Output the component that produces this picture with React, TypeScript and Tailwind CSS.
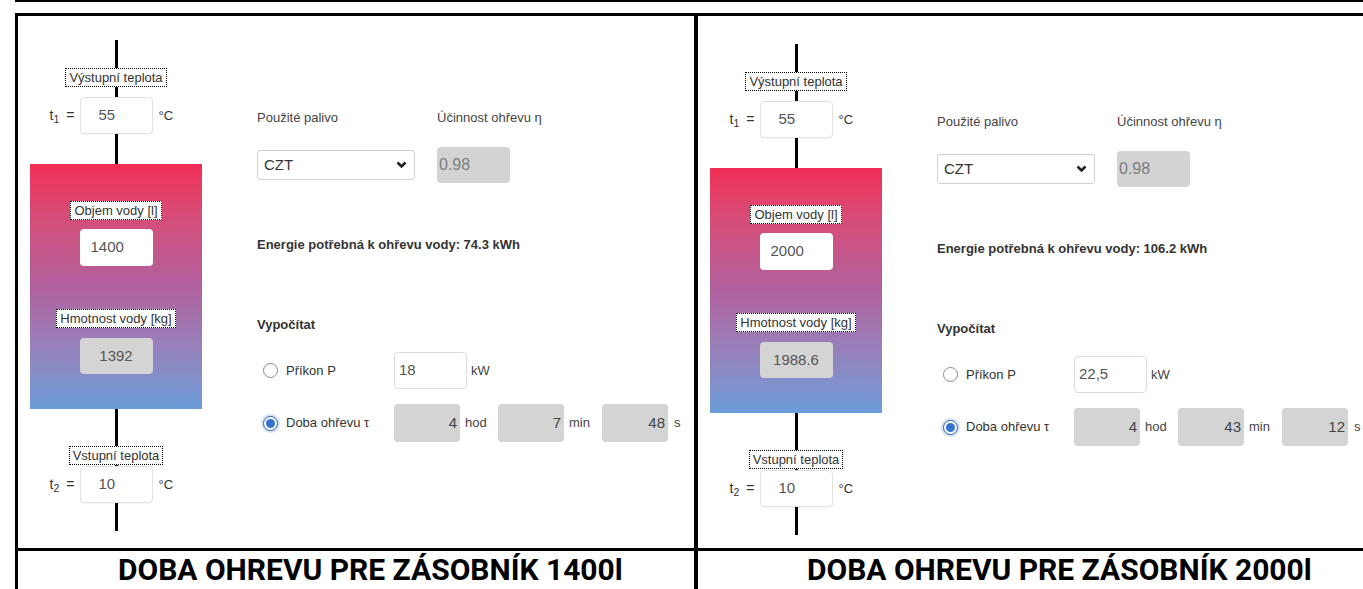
import React from "react";

type PanelData = {
  volume: string;
  mass: string;
  energy: string;
  power: string;
  h: string;
  m: string;
  s: string;
};

function Tag({ children }: { children: React.ReactNode }) {
  return (
    <div className="border border-dotted border-black bg-white px-[3px] text-[13px] leading-[17px] text-[#333] whitespace-nowrap">
      {children}
    </div>
  );
}

function TempRow({ idx, value }: { idx: string; value: string }) {
  return (
    <div className="grid w-[172px] grid-cols-[1fr_73px_1fr] items-center">
      <span className="flex items-baseline justify-self-end pr-[5px] text-[14px] text-[#333]">
        <span>
          t<sub>{idx}</sub>
        </span>
        <span className="ml-[7px]">=</span>
      </span>
      <div className="flex h-[37px] w-[73px] items-center rounded-[4px] border border-[#e2e2e2] bg-white pl-[18px] text-[15px] text-[#555] shadow-[0_1px_2px_rgba(0,0,0,0.04)]">
        {value}
      </div>
      <span className="pl-[6px] text-[13px] text-[#333]">°C</span>
    </div>
  );
}

function Radio({ checked }: { checked?: boolean }) {
  if (checked) {
    return (
      <span className="flex h-[15px] w-[15px] items-center justify-center rounded-full border border-[#2a5fb4] bg-white shadow-[0_0_0_2px_#d5e3f7]">
        <span className="h-[9px] w-[9px] rounded-full bg-[#3572d2]" />
      </span>
    );
  }
  return <span className="h-[15px] w-[15px] rounded-full border border-[#8a8a8a] bg-white" />;
}

function Gray({ value }: { value: string }) {
  return (
    <div className="flex h-[38px] w-[66px] items-center justify-end rounded-[4px] bg-[#d4d4d4] pr-[3px] text-[15px] text-[#444]">
      {value}
    </div>
  );
}

function Panel({ d }: { d: PanelData }) {
  return (
    <div className="flex pl-[12px]">
      {/* diagram */}
      <div className="flex w-[172px] flex-col items-center pt-[24px]">
        <div className="h-[28px] w-[3px] bg-black" />
        <Tag>Výstupní teplota</Tag>
        <div className="h-[10px] w-[3px] bg-black" />
        <TempRow idx="1" value="55" />
        <div className="h-[30px] w-[3px] bg-black" />
        <div className="flex h-[245px] w-[172px] flex-col items-center bg-linear-to-b from-[#f12c55] via-[#b0609f] to-[#6a9dd9] pt-[37px]">
          <Tag>Objem vody [l]</Tag>
          <div className="mt-[9px] flex h-[37px] w-[73px] items-center rounded-[4px] bg-white pl-[11px] text-[15px] text-[#555]">
            {d.volume}
          </div>
          <div className="mt-[43px]">
            <Tag>Hmotnost vody [kg]</Tag>
          </div>
          <div className="mt-[10px] flex h-[36px] w-[73px] items-center justify-center rounded-[4px] bg-[#d4d4d4] text-[15px] text-[#555]">
            {d.mass}
          </div>
        </div>
        <div className="h-[37px] w-[3px] bg-black" />
        <Tag>Vstupní teplota</Tag>
        <div className="h-[1px] w-[3px] bg-black" />
        <TempRow idx="2" value="10" />
        <div className="h-[28px] w-[3px] bg-black" />
      </div>

      {/* form */}
      <div className="ml-[55px] flex flex-col pt-[94px] text-[13px] text-[#333]">
        <div className="flex leading-[16px] text-[#444]">
          <span className="w-[180px]">Použité palivo</span>
          <span>Účinnost ohřevu η</span>
        </div>
        <div className="mt-[21px] flex h-[36px] items-center">
          <div className="flex h-[30px] w-[158px] items-center justify-between rounded-[3px] border border-[#cfcfcf] bg-white pl-[6px] pr-[7px] text-[15px] text-[#333]">
            <span>CZT</span>
            <svg width="11" height="8" viewBox="0 0 11 8">
              <path d="M1.5 1.5 L5.5 5.5 L9.5 1.5" fill="none" stroke="#222" strokeWidth="2.6" />
            </svg>
          </div>
          <div className="ml-[22px] flex h-[36px] w-[73px] items-center rounded-[4px] bg-[#d3d3d3] pl-[2px] text-[16px] text-[#7d7d7d]">
            0.98
          </div>
        </div>
        <div className="mt-[54px] whitespace-nowrap font-bold leading-[16px] text-[#333]">
          Energie potřebná k ohřevu vody: {d.energy} kWh
        </div>
        <div className="mt-[64px] font-bold leading-[16px] text-[#333]">Vypočítat</div>
        <div className="mt-[19px] flex h-[37px] items-center">
          <div className="flex w-[137px] items-center pl-[6px]">
            <Radio />
            <span className="ml-[8px]">Příkon P</span>
          </div>
          <div className="flex h-[37px] w-[73px] items-center rounded-[4px] border border-[#dcdcdc] bg-white pl-[4px] text-[15px] text-[#555]">
            {d.power}
          </div>
          <span className="ml-[4px] text-[#444]">kW</span>
        </div>
        <div className="mt-[15px] flex h-[38px] items-center">
          <div className="flex w-[137px] items-center pl-[6px]">
            <Radio checked />
            <span className="ml-[8px]">Doba ohřevu τ</span>
          </div>
          <div className="flex w-[104px] items-center">
            <Gray value={d.h} />
            <span className="ml-[5px] text-[#444]">hod</span>
          </div>
          <div className="flex w-[104px] items-center">
            <Gray value={d.m} />
            <span className="ml-[5px] text-[#444]">min</span>
          </div>
          <div className="flex items-center">
            <Gray value={d.s} />
            <span className="ml-[6px] text-[#444]">s</span>
          </div>
        </div>
      </div>
    </div>
  );
}

export default function App() {
  const left: PanelData = { volume: "1400", mass: "1392", energy: "74.3", power: "18", h: "4", m: "7", s: "48" };
  const right: PanelData = { volume: "2000", mass: "1988.6", energy: "106.2", power: "22,5", h: "4", m: "43", s: "12" };
  return (
    <div className="h-[589px] w-[1363px] overflow-hidden bg-white font-['Liberation_Sans',Arial,sans-serif]">
      <div className="ml-[15px] border-t-2 border-black" />
      <div className="ml-[15px] mt-[11px] grid grid-cols-[680px_1fr] border-l-[3px] border-t-[3px] border-black">
        <div className="h-[535px] border-b-[3px] border-r-4 border-black">
          <Panel d={left} />
        </div>
        <div className="h-[535px] border-b-[3px] border-black pt-[4px]">
          <Panel d={right} />
        </div>
        <div className="h-[40px] border-r-4 border-black pl-[100px] pt-[4px] font-['Roboto',sans-serif] text-[30px] font-bold leading-[30px] text-black">
          DOBA OHREVU PRE ZÁSOBNÍK 1400l
        </div>
        <div className="h-[40px] pl-[109px] pt-[4px] font-['Roboto',sans-serif] text-[30px] font-bold leading-[30px] text-black">
          DOBA OHREVU PRE ZÁSOBNÍK 2000l
        </div>
      </div>
    </div>
  );
}
